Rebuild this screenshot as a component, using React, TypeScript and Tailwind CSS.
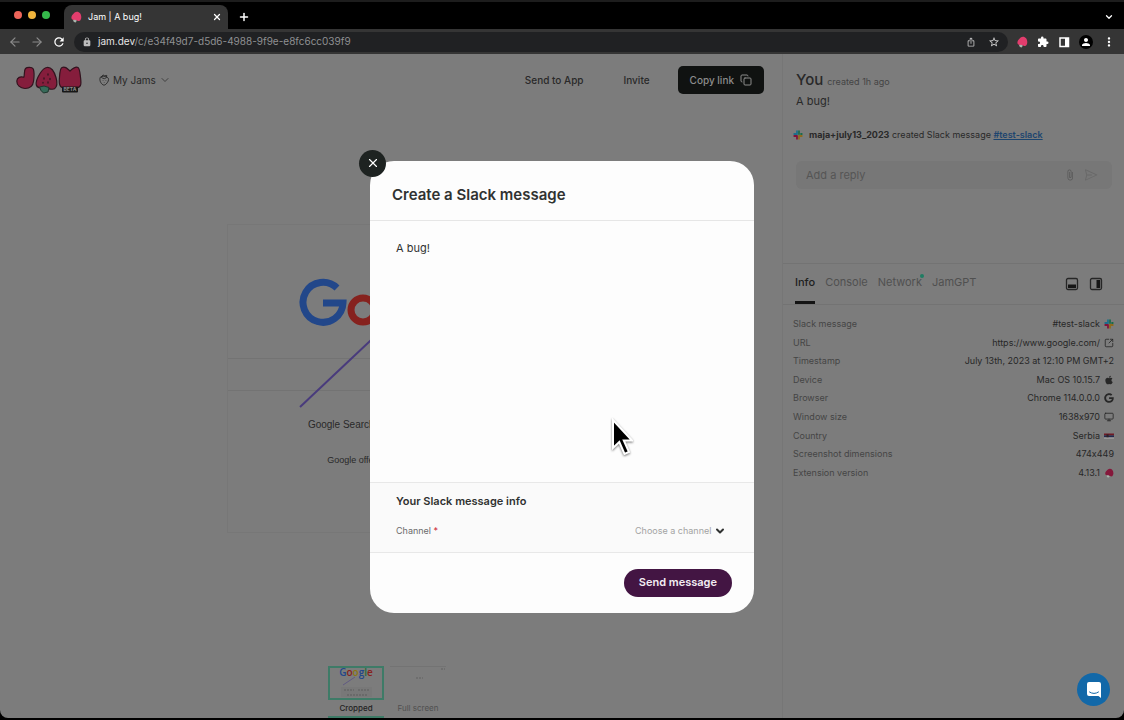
import type { ReactNode } from 'react';
import { ArrowLeft, ArrowRight, ChevronDown, Copy, Monitor, Plus, SquareArrowOutUpRight, X } from 'lucide-react';
import { FaApple, FaGoogle } from 'react-icons/fa';
import { MdAttachFile, MdExtension, MdIosShare, MdLock, MdMoreVert, MdPerson, MdRefresh, MdStarBorder } from 'react-icons/md';
import { VscSend } from 'react-icons/vsc';
import clsx from 'clsx';

interface InfoRow {
  label: string;
  value: string;
  icon?: ReactNode;
}

function Berry({ className, fill }: { className?: string; fill: string }) {
  return (
    <svg viewBox="0 0 12 12" className={className} aria-hidden="true">
      <path d="M7 .8C9.500 .8 11.300 3.200 11.300 6.200 11.200 9 9.800 10.600 8.200 9.900 6.600 9.200 4.700 9.900 2.800 8.800 .6 7.500 1.400 5 2.800 3.500 4 2.200 5.200 .8 7 .8Z" fill={fill} />
      <path d="M3 9 5 8.800 6.800 9.600 5.800 11.500 3.900 11Z" fill="#a9b5ad" />
    </svg>
  );
}

function SlackIcon() {
  return (
    <svg viewBox="0 0 20 20" className="size-2.5 shrink-0" fill="none" strokeWidth="3.600" strokeLinecap="round" aria-hidden="true">
      <path d="M8 2.500V8M2.500 8H8" stroke="#1d6f8c" />
      <path d="M12 2.500V8M17.500 8H16" stroke="#1c6b4c" />
      <path d="M12 12V17.500M12 12H17.500" stroke="#8f6b1d" />
      <path d="M8 12V17.500M2.500 12H8" stroke="#81143a" />
    </svg>
  );
}

function SerbiaFlag() {
  return (
    <svg viewBox="0 0 12 8" className="h-2 w-2.5 shrink-0" aria-hidden="true">
      <path d="M0 1H12V3.300H0Z" fill="#701a25" />
      <path d="M0 3.300H12V5.600H0Z" fill="#22294e" />
      <path d="M0 5.600H12V7.500H0Z" fill="#999" />
      <path d="M3 2H5.500V5.500H3Z" fill="#302024" />
    </svg>
  );
}

function PanelIcon({ side }: { side: 'bottom' | 'right' }) {
  return (
    <svg viewBox="0 0 14 14" className="size-3.5" fill="none" aria-hidden="true">
      <rect x="1.500" y="1.500" width="11" height="11" rx="1.500" stroke="#262626" strokeWidth="1.300" />
      {side === 'bottom'
        ? <path d="M3 7.500H11V11H3Z" fill="#161616" />
        : <path d="M7.500 3H11.200V11H7.500Z" fill="#161616" />}
    </svg>
  );
}

function JamLogo() {
  return (
    <svg viewBox="0 0 66 28" className="h-7 w-[66px]" role="img" aria-label="Jam beta">
      <g fill="#851d3c" stroke="#32131e" strokeWidth="1.200" strokeLinejoin="round">
        <path d="M9.500 2.500C11 1 16 .8 17.300 3 18 5 18 12 17.600 15 17 20 13.500 22.500 9 22.500 4 22.500 .7 18.800 .8 15 1 11.500 4.500 10 7.800 11.300 8.800 9 7.800 4.500 9.500 2.500Z" />
        <path d="M31 1.500C35.500 1 38.500 6.500 40 11.500 41.300 16 41.500 20.500 38.500 22.800 35.500 24.300 31 22 27.500 22 24 22 21 22 20.300 19 19.500 15.500 21.500 11.500 24 7.500 26 4.300 28 1.800 31 1.500Z" />
        <path d="M46 1.500C49 .2 51 2.200 54 5 57 2.200 59.500 .2 62 1.500 64 3 64 8 64.600 12 65.200 17 65.500 21.300 61 21.600H47.500C42.800 21.300 43 16 43.500 11 43.800 7 44 2.500 46 1.500Z" />
      </g>
      <g stroke="#32131e" strokeWidth="1.300" strokeLinecap="round">
        <path d="M32 8V9M28 12V13M34 12.500V13.500M27 16.500V17M32 16V17" />
      </g>
      <path d="M23.500 21 28 20 33 21.500 32 26 27.500 27 25 24.500Z" fill="#376a59" stroke="#1f352d" strokeWidth="1" strokeLinejoin="round" />
      <rect x="46" y="20.500" width="16" height="6" rx="1" fill="#171717" />
      <text x="54" y="25.400" textAnchor="middle" fontSize="5" fontWeight="700" fontFamily="Inter, sans-serif" fill="#8c8c8c">BETA</text>
    </svg>
  );
}

const infoRows: InfoRow[] = [
  { label: 'Slack message', value: '#test-slack', icon: <SlackIcon /> },
  { label: 'URL', value: 'https://www.google.com/', icon: <SquareArrowOutUpRight className="size-2.5" /> },
  { label: 'Timestamp', value: 'July 13th, 2023 at 12:10 PM GMT+2' },
  { label: 'Device', value: 'Mac OS 10.15.7', icon: <FaApple className="size-2.5" /> },
  { label: 'Browser', value: 'Chrome 114.0.0.0', icon: <FaGoogle className="size-2.5" /> },
  { label: 'Window size', value: '1638x970', icon: <Monitor className="size-2.5" /> },
  { label: 'Country', value: 'Serbia', icon: <SerbiaFlag /> },
  { label: 'Screenshot dimensions', value: '474x449' },
  { label: 'Extension version', value: '4.13.1', icon: <Berry className="size-2.5 shrink-0" fill="#85183b" /> },
];

const tabs = ['Info', 'Console', 'Network', 'JamGPT'];

function BrowserChrome() {
  return (
    <header className="text-white">
      <div className="flex h-[29px] items-end border-t-2 border-[#1d1d1d] bg-black pr-2.5">
        <div className="flex gap-1.5 pb-2.5 pl-3.5">
          <span className="size-2 rounded-full bg-[#ed655a]" />
          <span className="size-2 rounded-full bg-[#f0b43c]" />
          <span className="size-2 rounded-full bg-[#35b84b]" />
        </div>
        <div className="ml-3.5 flex h-6 w-[164px] items-center rounded-t-lg bg-[#353535] px-1.5">
          <Berry className="size-3" fill="#e23d6d" />
          <span className="ml-1.5 flex-1 text-[9px]">Jam | A bug!</span>
          <button aria-label="Close tab"><X className="size-2.5" strokeWidth={3} /></button>
        </div>
        <button aria-label="New tab" className="ml-2.5 pb-1.5"><Plus className="size-3" strokeWidth={3} /></button>
        <button aria-label="Search tabs" className="ml-auto pb-[7px]"><ChevronDown className="size-2.5" strokeWidth={3} /></button>
      </div>
      <div className="flex h-[25px] items-center bg-[#353535] px-2">
        <button aria-label="Back" className="text-[#8b8b8b]"><ArrowLeft className="size-3.5" /></button>
        <button aria-label="Forward" className="ml-2 text-[#8b8b8b]"><ArrowRight className="size-3.5" /></button>
        <button aria-label="Reload" className="ml-2"><MdRefresh className="size-3.5" /></button>
        <div className="ml-2 flex h-5 flex-1 items-center rounded-full bg-[#202123] px-2">
          <MdLock className="size-2.5 text-[#bdbdbd]" />
          <span className="ml-1.5 text-[10px] text-[#8f9092]">
            <span className="text-[#e6e6e6]">jam.dev</span>/c/e34f49d7-d5d6-4988-9f9e-e8fc6cc039f9
          </span>
          <button aria-label="Share" className="ml-auto text-[#c4c4c4]"><MdIosShare className="size-2.5" /></button>
          <button aria-label="Bookmark" className="ml-3 text-[#d5d5d5]"><MdStarBorder className="size-3" /></button>
        </div>
        <div className="ml-2 flex items-center gap-[9px]">
          <button aria-label="Jam extension"><Berry className="size-3" fill="#e23d6d" /></button>
          <button aria-label="Extensions"><MdExtension className="size-3" /></button>
          <button aria-label="Side panel">
            <svg viewBox="0 0 12 12" className="size-3" fill="none">
              <path d="M2 2H10.500V10.500H2Z" stroke="white" strokeWidth="1.500" />
              <path d="M7 2H10.500V10.500H7Z" fill="white" />
            </svg>
          </button>
          <button aria-label="Profile" className="rounded-full bg-black p-px"><MdPerson className="size-3" /></button>
          <button aria-label="Menu"><MdMoreVert className="size-3.5" /></button>
        </div>
      </div>
    </header>
  );
}

function TopBar() {
  return (
    <div className="flex items-center py-3 pr-[18px] pl-4">
      <JamLogo />
      <button className="ml-4 flex items-center text-[10px] text-[#292929]">
        <svg viewBox="0 0 12 13" className="h-3 w-3" fill="none" stroke="currentColor" aria-hidden="true">
          <path d="M2 3.500C.8 6 2 10 5 11.800 6.500 12.600 8 11.500 9.500 9.500 11.500 7 11.300 4.500 9.500 3.500 7 2 4.500 2 2 3.500ZM3 3.500 5 1 6.500 2 9 1.500 8.500 4 6.500 5 4.500 4.500ZM5 7V7.500M8 7V7.500M6.300 9V9.500" />
        </svg>
        <span className="ml-[3px]">My Jams</span>
        <ChevronDown className="ml-[3px] size-3 text-[#404040]" strokeWidth={2} />
      </button>
      <div className="ml-auto flex items-center text-[10px] font-medium text-[#292929]">
        <button className="px-3 py-1.5">Send to App</button>
        <button className="ml-4 px-3 py-1.5">Invite</button>
        <button className="ml-4 flex h-7 items-center gap-1.5 rounded-[5px] bg-[#101211] px-3 text-[#8c8c8c]">
          Copy link <Copy className="size-3" />
        </button>
      </div>
    </div>
  );
}

function GoogleShot() {
  return (
    <div className="relative h-[309px] w-[328px] border border-[#777] pt-[53px] font-['Liberation_Sans',sans-serif] text-[#292929]">
      <svg viewBox="0 0 184 66" className="mx-auto h-[66px] w-[184px]" fill="none" role="img" aria-label="Google">
        <path d="M38 10A20 20 0 1 0 44 25H24" stroke="#22478a" strokeWidth="7" />
        <circle cx="64" cy="32" r="12" stroke="#86221e" strokeWidth="7" />
        <circle cx="98" cy="32" r="12" stroke="#8c7415" strokeWidth="7" />
      </svg>
      <div className="mt-3.5 h-[33px] border-y border-[#737373]" />
      <div className="mt-[26px] flex justify-center gap-[22px] text-[10px]">
        <button>Google Search</button>
        <button>I'm Feeling Lucky</button>
      </div>
      <p className="mt-[22px] text-center text-[9px]">Google offered in:  српски srpski</p>
      <svg viewBox="0 0 90 84" className="absolute top-[99px] left-[71px] h-[84px] w-[90px]" aria-hidden="true">
        <path d="M1 83 88 1" stroke="#493b7c" strokeWidth="2" />
      </svg>
    </div>
  );
}

function Thumbnails() {
  return (
    <div className="flex justify-center gap-1.5 pr-2 text-center text-[8px] leading-3">
      <button className="w-14 font-medium text-[#222]">
        <span className="mb-0.5 block h-[34px] overflow-hidden border-2 border-[#3e7b67]">
          <span className="block font-['Open_Sans',sans-serif] text-[10px] leading-2 font-semibold">
            <span className="text-[#22478a]">G</span>
            <span className="text-[#86221e]">o</span>
            <span className="text-[#8c7415]">o</span>
            <span className="text-[#22478a]">g</span>
            <span className="text-[#27693a]">l</span>
            <span className="text-[#86221e]">e</span>
          </span>
          <svg viewBox="0 0 52 22" className="block h-[22px] w-full" fill="none" aria-hidden="true">
            <path d="M13 9 25 1" stroke="#615a83" />
            <path d="M11 11H42V21H11Z" fill="#787878" />
            <path d="M14 14H24M28 14H40M17 19H37" stroke="#5c5c5c" strokeDasharray="2 1" />
          </svg>
        </span>
        Cropped
        <span className="mt-0.5 block h-0.5 bg-[#3e7b67]" />
      </button>
      <button className="flex w-14 flex-col text-[#505050]">
        <span className="mb-0.5 block h-[34px] w-full border-t border-[#737373]">
          <svg viewBox="0 0 56 32" className="block h-8 w-full" fill="none" aria-hidden="true">
            <path d="M26 11H33M51 2H55" stroke="#606060" strokeDasharray="2 1" />
          </svg>
        </span>
        <span className="w-full">Full screen</span>
      </button>
    </div>
  );
}

function Sidebar() {
  return (
    <aside className="flex w-[342px] flex-col border-l border-[#767676] pt-4">
      <div className="flex h-[193px] flex-col pr-3 pl-[13px] text-[#292929]">
        <h1 className="text-[15px] leading-5 font-medium">
          You <span className="text-[9px] font-normal text-[#444]">created 1h ago</span>
        </h1>
        <p className="mt-px text-[11px] leading-4">A bug!</p>
        <p className="mt-[18px] -ml-[3px] flex items-center gap-1.5 text-[9px] leading-4">
          <SlackIcon />
          <span><b className="font-bold">maja+july13_2023</b> created Slack message <a href="#test-slack" className="font-semibold text-[#1d456f] underline">#test-slack</a></span>
        </p>
        <label className="mt-[18px] flex h-7 items-center gap-2 rounded-md bg-[#777] px-2.5 text-[#595959]">
          <input aria-label="Add a reply" placeholder="Add a reply" className="min-w-0 flex-1 bg-transparent text-[11px] outline-none placeholder:text-[#555]" />
          <MdAttachFile className="size-3" />
          <VscSend className="mr-1 size-3.5 text-[#696969]" />
        </label>
      </div>
      <div role="tablist" className="flex h-[42px] items-stretch gap-2.5 border-y border-[#737373] pr-[21px] pl-3 text-[11px] text-[#505050]">
        {tabs.map((tab, i) => (
          <button
            key={tab}
            role="tab"
            aria-selected={i === 0}
            className={clsx('relative border-b-[3px]', i === 0 ? 'border-[#141414] font-medium text-[#202020]' : 'border-transparent')}
          >
            {tab}
            {tab === 'Network' && <span className="absolute top-2.5 -right-0.5 size-1 rounded-full bg-[#1f7d63]" />}
          </button>
        ))}
        <div className="ml-auto flex items-center gap-2.5">
          <button aria-label="Dock to bottom"><PanelIcon side="bottom" /></button>
          <button aria-label="Dock to right"><PanelIcon side="right" /></button>
        </div>
      </div>
      <div className="px-2.5 pt-2.5">
        <table className="h-[167px] w-full text-[9px] leading-3 [font-feature-settings:'calt'_0]">
          <tbody>
            {infoRows.map((row) => (
              <tr key={row.label}>
                <th scope="row" className="p-0 text-left font-normal text-[#454545]">{row.label}</th>
                <td className="p-0 text-[#272727]">
                  <span className="flex items-center justify-end gap-1">{row.value}{row.icon}</span>
                </td>
              </tr>
            ))}
          </tbody>
        </table>
      </div>
    </aside>
  );
}

function SlackDialog() {
  return (
    <div role="dialog" aria-labelledby="slack-title" className="relative w-96 rounded-3xl bg-[#fdfdfd] text-[#303231]">
      <button aria-label="Close" className="absolute -top-[11px] -left-[11px] flex size-[27px] items-center justify-center rounded-full bg-[#1e2321] text-white">
        <X className="size-3.5" />
      </button>
      <h2 id="slack-title" className="border-b border-[#e6e6e6] px-[22px] pt-6 pb-[15px] text-[15px] leading-5 font-semibold">Create a Slack message</h2>
      <textarea
        aria-label="Message"
        defaultValue="A bug!"
        className="block h-[261px] w-full resize-none px-[26px] pt-[19px] text-[11px] leading-4 outline-none"
      />
      <div className="border-y border-[#e8e8e8] bg-[#fafafa] px-[26px] pt-2.5 pb-[13px]">
        <h3 className="text-[11px] leading-4 font-semibold">Your Slack message info</h3>
        <div className="mt-3.5 flex items-center text-[9px] leading-4">
          <label htmlFor="channel" className="flex-1 text-[#6b6b6b]">Channel <span className="text-[#c23]">*</span></label>
          <select id="channel" defaultValue="" className="appearance-none text-[#a3a3a3] outline-none">
            <option value="">Choose a channel</option>
          </select>
          <ChevronDown className="pointer-events-none mr-0.5 ml-0.5 size-3" strokeWidth={4} />
        </div>
      </div>
      <div className="flex justify-end px-[22px] py-4">
        <button className="h-7 rounded-full bg-[#431543] px-[15px] text-[11px] font-semibold text-[#f3edf3]">Send message</button>
      </div>
      <svg viewBox="0 0 22 38" className="pointer-events-none absolute top-[257px] left-[241px] h-[38px] w-[22px] drop-shadow-[0_1px_1px_#0008]" aria-hidden="true">
        <path d="M2 2V30L8.300 24 13.500 36 18 34 12.800 22.500H21Z" fill="black" stroke="white" strokeWidth="2" />
      </svg>
    </div>
  );
}

export default function App() {
  return (
    <div className="flex min-h-screen flex-col bg-black font-[Inter,sans-serif]">
      <BrowserChrome />
      <main className="relative mb-0.5 flex flex-1 overflow-hidden rounded-b-lg bg-[#7c7c7c]">
        <section className="flex flex-1 flex-col">
          <TopBar />
          <div className="flex flex-1 items-center justify-center pb-4">
            <GoogleShot />
          </div>
          <Thumbnails />
        </section>
        <Sidebar />
        <div className="absolute inset-0 flex items-center justify-center pt-px">
          <SlackDialog />
        </div>
        <button aria-label="Open chat" className="absolute right-3.5 bottom-3 flex size-[33px] items-center justify-center rounded-full bg-[#1268a8]">
          <svg viewBox="0 0 16 18" className="h-[18px] w-4" fill="none">
            <path d="M3 1H13Q15 1 15 3V17L12.500 15H3Q1 15 1 13V3Q1 1 3 1Z" fill="white" />
            <path d="M3.500 11Q8 14 12.500 11" stroke="#1268a8" strokeLinecap="round" />
          </svg>
        </button>
      </main>
    </div>
  );
}
